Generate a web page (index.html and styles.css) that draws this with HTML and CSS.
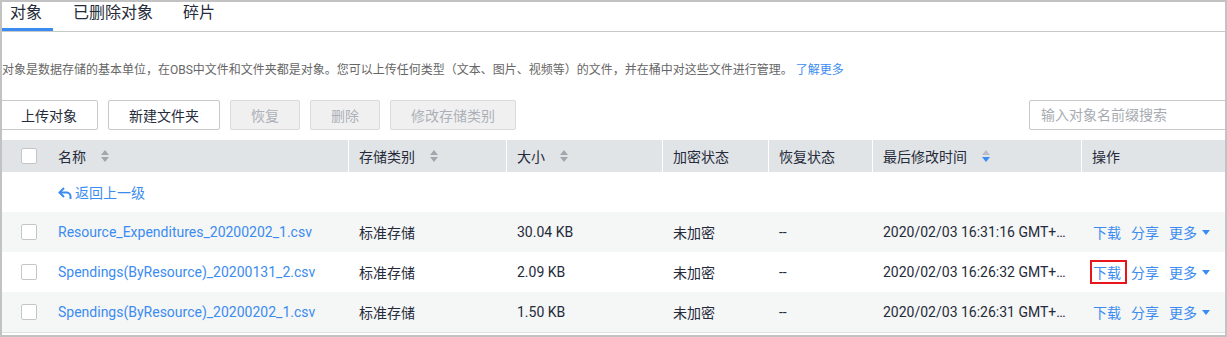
FILE: index.html
```html
<!DOCTYPE html>
<html lang="zh-CN">
<head>
  <meta charset="UTF-8" />
  <title>对象</title>
  <link rel="stylesheet" href="styles.css">
</head>
<body>
  <div class="frame">

    <div class="tabs">
      <a class="tab active">对象</a>
      <a class="tab">已删除对象</a>
      <a class="tab">碎片</a>
    </div>

    <p class="intro">对象是数据存储的基本单位，在OBS中文件和文件夹都是对象。您可以上传任何类型（文本、图片、视频等）的文件，并在桶中对这些文件进行管理。 <a class="link">了解更多</a></p>

    <div class="toolbar">
      <button class="btn first">上传对象</button>
      <button class="btn">新建文件夹</button>
      <button class="btn" disabled>恢复</button>
      <button class="btn" disabled>删除</button>
      <button class="btn" disabled>修改存储类别</button>
      <input class="search" type="text" placeholder="输入对象名前缀搜索" />
    </div>

    <div class="table">
      <div class="row head">
        <div class="cell"><span class="check"></span></div>
        <div class="cell">名称
          <svg class="sort" width="8" height="12" viewBox="0 0 8 12"><path d="M4 0L8 5H0z" fill="#a3a7ad"/><path d="M4 12L0 7h8z" fill="#a3a7ad"/></svg>
        </div>
        <div class="cell line">存储类别
          <svg class="sort" width="8" height="12" viewBox="0 0 8 12"><path d="M4 0L8 5H0z" fill="#a3a7ad"/><path d="M4 12L0 7h8z" fill="#a3a7ad"/></svg>
        </div>
        <div class="cell line">大小
          <svg class="sort" width="8" height="12" viewBox="0 0 8 12"><path d="M4 0L8 5H0z" fill="#a3a7ad"/><path d="M4 12L0 7h8z" fill="#a3a7ad"/></svg>
        </div>
        <div class="cell line">加密状态</div>
        <div class="cell line">恢复状态</div>
        <div class="cell line">最后修改时间
          <svg class="sort" width="8" height="12" viewBox="0 0 8 12"><path d="M4 0L8 5H0z" fill="#b9bdc2"/><path d="M4 12L0 7h8z" fill="#3b8cf0"/></svg>
        </div>
        <div class="cell line">操作</div>
      </div>

      <div class="row back">
        <div class="cell"></div>
        <div class="cell">
          <a class="link back-link">
            <svg width="14" height="13" viewBox="0 0 14 13"><path d="M6 2L1.5 6.5 6 11" fill="none" stroke="#3b8cf0" stroke-width="2"/><path d="M2 6.5h6.5a4 4 0 0 1 4 4V13" fill="none" stroke="#3b8cf0" stroke-width="2"/></svg>
            返回上一级
          </a>
        </div>
      </div>

      <div class="row stripe">
        <div class="cell"><span class="check"></span></div>
        <div class="cell"><a class="link">Resource_Expenditures_20200202_1.csv</a></div>
        <div class="cell">标准存储</div>
        <div class="cell">30.04 KB</div>
        <div class="cell">未加密</div>
        <div class="cell">--</div>
        <div class="cell"><span class="clip">2020/02/03 16:31:16 GMT+08:00</span></div>
        <div class="cell ops"><a class="link">下载</a><a class="link">分享</a><a class="link">更多<span class="caret"></span></a></div>
      </div>

      <div class="row">
        <div class="cell"><span class="check"></span></div>
        <div class="cell"><a class="link">Spendings(ByResource)_20200131_2.csv</a></div>
        <div class="cell">标准存储</div>
        <div class="cell">2.09 KB</div>
        <div class="cell">未加密</div>
        <div class="cell">--</div>
        <div class="cell"><span class="clip">2020/02/03 16:26:32 GMT+08:00</span></div>
        <div class="cell ops"><a class="link marked">下载</a><a class="link">分享</a><a class="link">更多<span class="caret"></span></a></div>
      </div>

      <div class="row stripe">
        <div class="cell"><span class="check"></span></div>
        <div class="cell"><a class="link">Spendings(ByResource)_20200202_1.csv</a></div>
        <div class="cell">标准存储</div>
        <div class="cell">1.50 KB</div>
        <div class="cell">未加密</div>
        <div class="cell">--</div>
        <div class="cell"><span class="clip">2020/02/03 16:26:31 GMT+08:00</span></div>
        <div class="cell ops"><a class="link">下载</a><a class="link">分享</a><a class="link">更多<span class="caret"></span></a></div>
      </div>
    </div>

  </div>
</body>
</html>
```

FILE: styles.css
```css
body {
  margin: 0;
  font-family: Roboto, "Noto Sans CJK SC", sans-serif;
  font-size: 14px;
  color: #252b3a;
  background-color: #fff;
}

.frame {
  box-sizing: border-box;
  width: 1227px;
  height: 337px;
  border: 2px solid #c2c2c2;
  overflow: hidden;
}

.tabs {
  display: flex;
  border-bottom: 1px solid #c9c9c9;
}

.tab {
  font-size: 16px;
  line-height: 22px;
  padding: 0 10px 4px;
  margin-right: 10px;
  border-bottom: 3px solid transparent;
  color: #252b3a;
}

.tab.active {
  padding-left: 8px;
  padding-right: 11px;
  border-bottom-color: #3b8cf0;
}

.intro {
  margin: 29px 0 0;
  font-size: 12px;
  line-height: 18px;
  color: #666;
}

.link {
  color: #3b8cf0;
  text-decoration: none;
  cursor: pointer;
}

.toolbar {
  display: flex;
  margin-top: 21px;
  height: 30px;
}

.btn {
  height: 30px;
  padding: 0 20px;
  margin-right: 10px;
  font-family: inherit;
  font-size: 14px;
  color: #252b3a;
  background-color: #fff;
  border: 1px solid #c8c8c8;
  border-radius: 2px;
}

.btn.first {
  margin-left: -2px;
}

.btn:disabled {
  color: #adb0b8;
  background-color: #f0f0f0;
  border-color: #dadada;
}

.search {
  box-sizing: border-box;
  width: 212px;
  height: 30px;
  margin-left: auto;
  margin-right: -16px;
  padding: 0 11px;
  font-family: inherit;
  font-size: 14px;
  border: 1px solid #c8c8c8;
  border-radius: 2px;
}

.search::placeholder {
  color: #a8abb2;
}

.table {
  margin-top: 10px;
  border-bottom: 1px solid #dfe1e3;
}

.row {
  display: grid;
  grid-template-columns: 46px 300px 158px 156px 106px 104px 209px 1fr;
  height: 40px;
  align-items: center;
}

.row.head {
  height: 32px;
  background-color: #e1e4e6;
  align-items: stretch;
}

.row.stripe {
  background-color: #f5f6f6;
}

.cell {
  display: flex;
  align-items: center;
  padding: 0 10px;
  min-width: 0;
  white-space: nowrap;
}

.cell:first-child {
  padding: 0 0 0 19px;
}

.cell.line {
  border-left: 1px solid #fff;
}

.row:not(.head) .cell:nth-child(n+3) {
  padding-left: 11px;
}

.row:not(.head) .cell.ops {
  padding-left: 12px;
}

.sort {
  margin-left: 15px;
}

.check {
  box-sizing: border-box;
  width: 16px;
  height: 16px;
  border: 1px solid #c6c6c6;
  border-radius: 2px;
  background-color: #fff;
}

.back-link {
  display: flex;
  align-items: center;
  gap: 3px;
}

.clip {
  display: block;
  width: 186px;
  overflow: hidden;
  text-overflow: ellipsis;
}

.ops .link {
  margin-right: 10px;
  display: flex;
  align-items: center;
}

.caret {
  width: 0;
  height: 0;
  margin-left: 5px;
  border-left: 4px solid transparent;
  border-right: 4px solid transparent;
  border-top: 5px solid #3b8cf0;
}

.ops .marked {
  outline: 2px solid #e8161c;
  padding: 0 4px 0 1px;
  margin-left: -1px;
  margin-right: 6px;
}
```
